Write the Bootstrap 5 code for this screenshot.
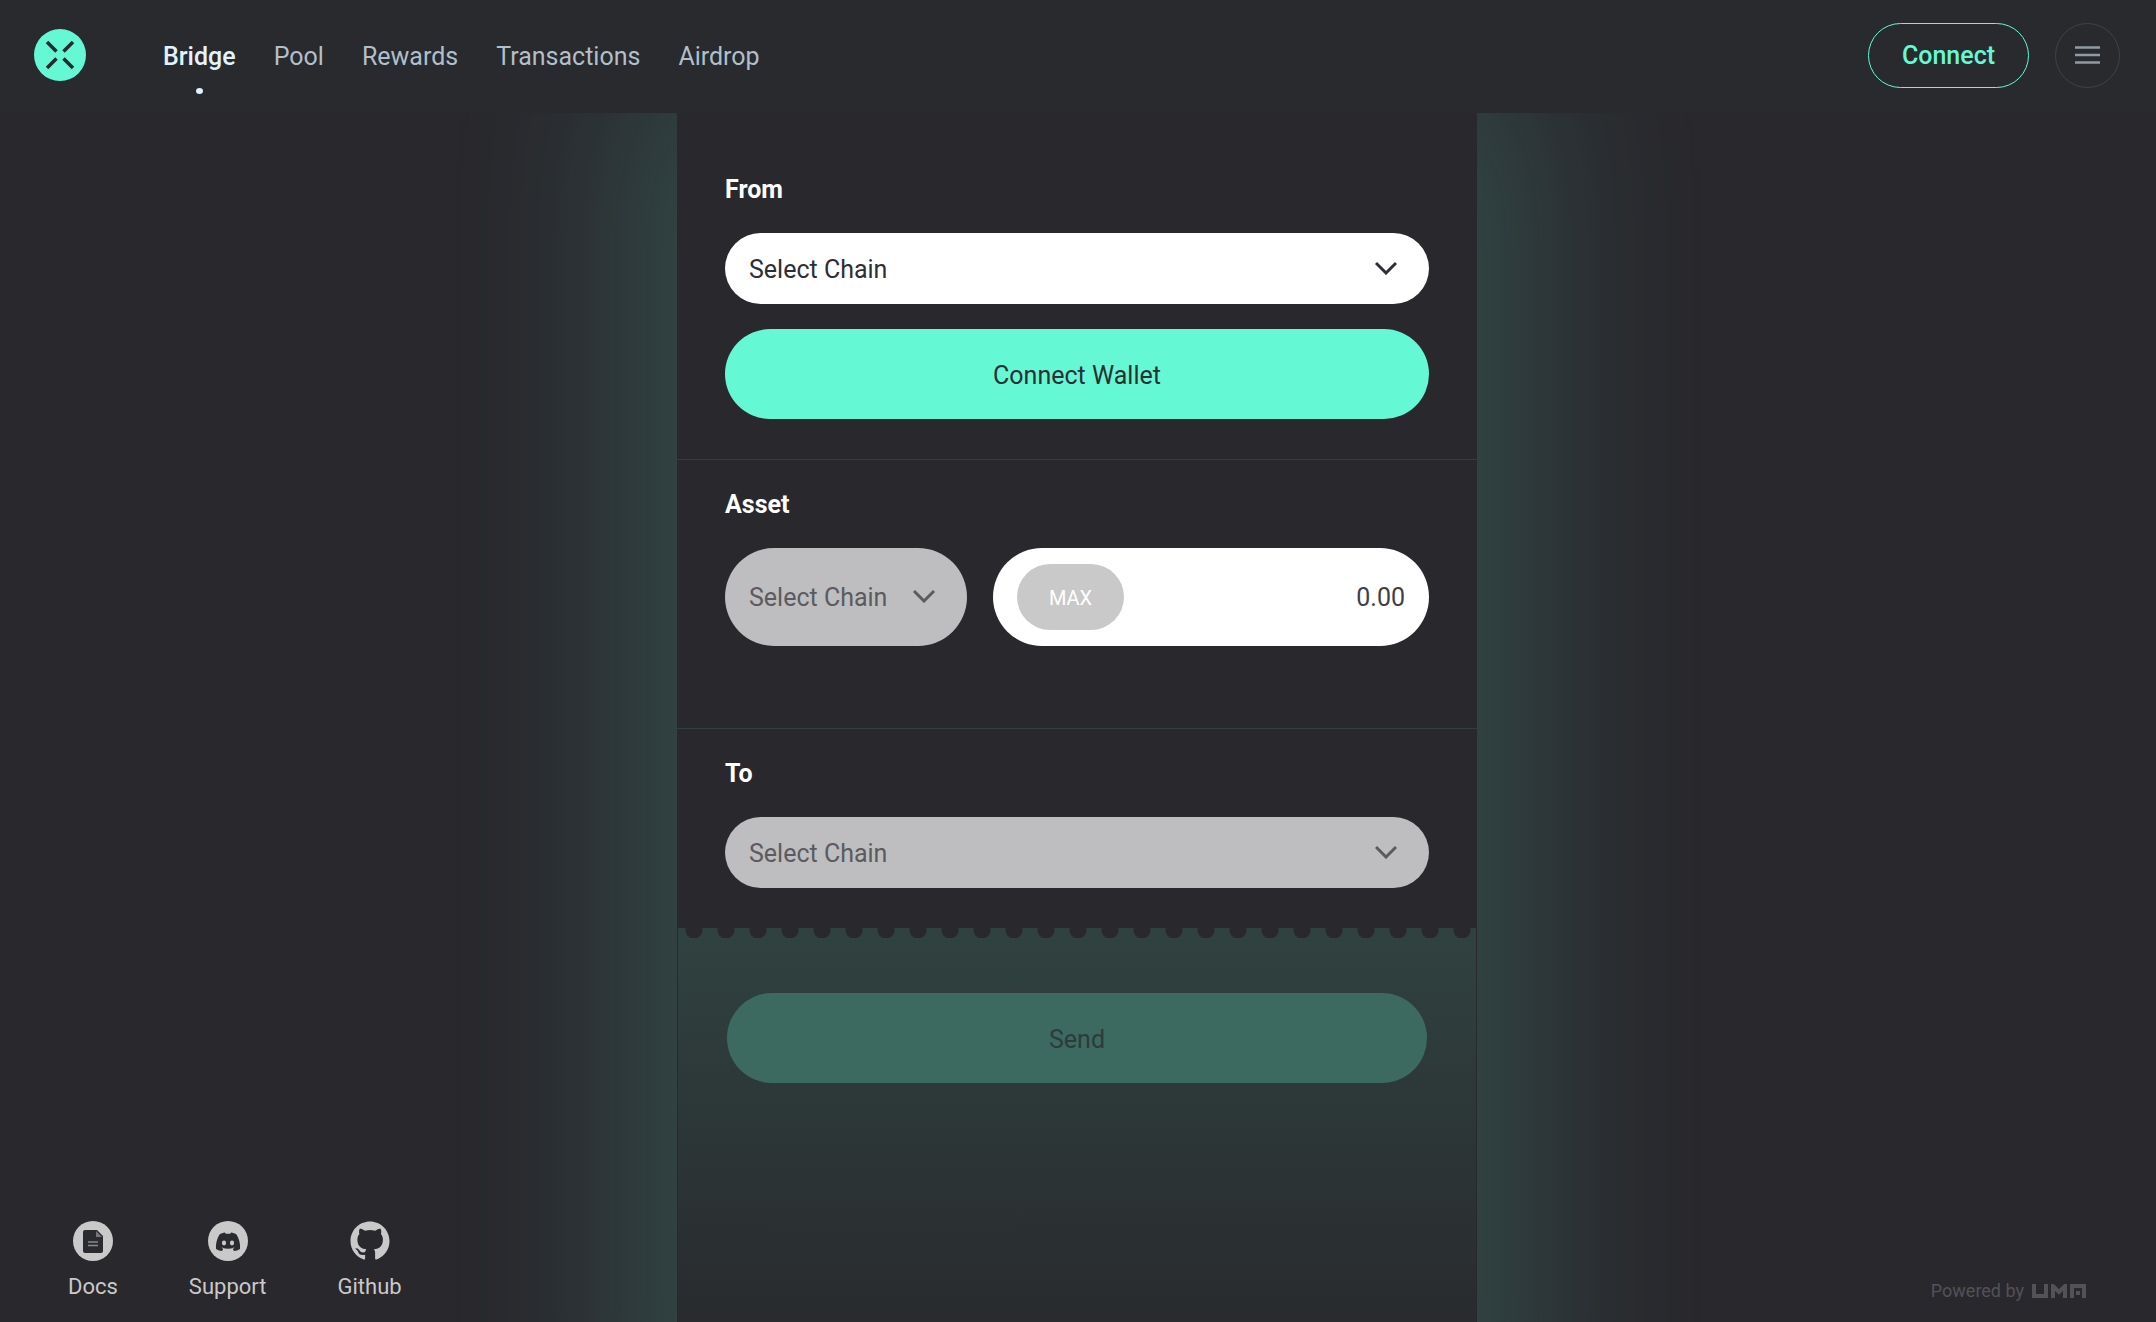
<!DOCTYPE html>
<html lang="en">
<head>
<meta charset="utf-8">
<meta name="viewport" content="width=device-width, initial-scale=1">
<title>Across Bridge</title>
<link href="https://cdn.jsdelivr.net/npm/bootstrap@5.3.0/dist/css/bootstrap.min.css" rel="stylesheet">
<style>
:root{--ink:#29282d;--bar:#282a2d;--mint:#65f8d5;--soft:#b1bfca}
body{background:var(--ink);color:#fff;font-family:Roboto,"Liberation Sans",sans-serif;font-size:25px;line-height:32px}
.topbar{background:var(--bar);height:113px;padding:0 36px 3px 34px}
.topbar .navbar-nav{--bs-navbar-nav-link-padding-x:0;gap:38px;margin-left:77px;padding-top:3px}
.topbar .nav-link{color:var(--soft);padding:0;position:relative}
.topbar .nav-link.active{color:#e0f3ff;font-weight:500}
.topbar .nav-link.active::after{content:"";position:absolute;left:50%;top:47px;width:7px;height:6px;margin-left:-3px;border-radius:50%;background:#e0f3ff}
.btn-wallet{width:161px;height:65px;border:1px solid var(--mint);border-radius:33px;color:var(--mint);font-size:25px;font-weight:500;padding:2px 0 0}
.btn-wallet:hover{color:var(--ink);background:var(--mint)}
.btn-menu{width:65px;height:65px;border:1px solid #3f4247;border-radius:50%;padding:0}
.gap-26{gap:26px}
.stage{overflow:hidden;position:relative;padding-right:2px}
.panel{width:800px;max-width:100%;position:relative}
.glow{position:absolute;inset:0 0 -110px 0;box-shadow:0 0 160px 60px rgba(103,248,214,.16)}
.panel-body{position:relative;background:var(--ink)}
.block{padding:25px 48px 40px}
.block+.block{border-top:1px solid #2f403f}
.block-first{padding-top:57px}
.block-asset{padding-bottom:82px}
.block label{display:block;font-weight:700;line-height:40px;margin-bottom:23px}
.pill{height:71px;border:0;border-radius:36px;padding:2px 24px 0;font-size:25px;color:#2c2f33;background-color:#fff;background-image:none;-webkit-appearance:none;appearance:none}
.pill:disabled{color:#5b5b5f;background-color:#bebec0;opacity:1}
.pill-wrap{position:relative}
.pill-wrap svg{position:absolute;right:32px;top:50%;margin-top:-8px;pointer-events:none}
.btn-xl{height:90px;border-radius:45px;font-size:25px;border:0;padding:3px 0 0}
.btn-mint,.btn-mint:hover{background:var(--mint);color:#2c2f33;margin-top:25px}
.pill-tall{height:98px;border-radius:49px}
.coin{flex:0 0 242px}
.amount-box{background:#fff;padding:0 24px;min-width:0}
.btn-max,.btn-max:disabled{flex:0 0 107px;height:66px;border-radius:33px;background:#c9c9c9;color:#fff;font-size:20px;border:0;opacity:1;padding:2px 0 0}
.amount-input{width:0;border:0;background:none;text-align:right;color:#3e4047;font-size:25px;padding:2px 0 0;outline:0}
.amount-input::placeholder{color:#3e4047;opacity:1}
.ticket{position:relative;margin:0 1px;background:linear-gradient(#304240,#292b2e)}
.ticket::before{content:"";position:absolute;left:0;right:0;top:0;height:10px;background:radial-gradient(circle 9px at 16px 2px,var(--ink) 8px,transparent 9px) 0 0/32px 10px}
.ticket-body{padding:65px 49px}
.btn-send,.btn-send:disabled{background:#3c6a60;color:#2d3b3b;opacity:1}
.foot-links{position:absolute;left:68px;bottom:21px;gap:71px}
.foot-links a{color:#c9c9c9;text-decoration:none;font-size:22px;line-height:28px}
.foot-links svg{display:block;margin:0 auto 12px}
.powered{position:absolute;right:70px;bottom:15px;color:#525257;font-size:18px;text-decoration:none}
</style>
</head>
<body class="vh-100 d-flex flex-column overflow-hidden">
<header class="navbar navbar-expand topbar flex-shrink-0">
  <a href="#" class="d-block" aria-label="Across home"><svg class="d-block" width="52" height="52" viewBox="0 0 52 52"><circle cx="26" cy="26" r="26" fill="#65f8d5"/><path d="M13 13l9.500 9.500M39 13l-9.500 9.500M13 39l9.500-9.500M39 39l-9.500-9.500" stroke="#282a2d" stroke-width="3.500"/></svg></a>
  <nav aria-label="Main"><ul class="navbar-nav">
    <li class="nav-item"><a class="nav-link active" aria-current="page" href="#">Bridge</a></li>
    <li class="nav-item"><a class="nav-link" href="#">Pool</a></li>
    <li class="nav-item"><a class="nav-link" href="#">Rewards</a></li>
    <li class="nav-item"><a class="nav-link" href="#">Transactions</a></li>
    <li class="nav-item"><a class="nav-link" href="#">Airdrop</a></li>
  </ul></nav>
  <div class="d-flex align-items-center gap-26 ms-auto">
    <button type="button" class="btn btn-wallet">Connect</button>
    <button type="button" class="btn btn-menu" aria-label="Menu"><svg class="d-block mx-auto" width="25" height="20" viewBox="0 0 25 20"><path d="M0 2.500h25M0 10h25M0 17.500h25" stroke="#8e9ba5" stroke-width="2.500"/></svg></button>
  </div>
</header>
<main class="stage flex-grow-1 d-flex justify-content-center">
  <div class="panel d-flex flex-column">
    <div class="glow"></div>
    <form class="panel-body d-flex flex-column flex-grow-1">
      <section class="block block-first">
        <label for="from">From</label>
        <div class="pill-wrap">
          <select id="from" class="form-select pill"><option>Select Chain</option></select>
          <svg width="22" height="14" viewBox="0 0 22 14"><path d="M1 2l10 10L21 2" fill="none" stroke="#2c2f33" stroke-width="3"/></svg>
        </div>
        <button type="button" class="btn btn-mint btn-xl w-100">Connect Wallet</button>
      </section>
      <section class="block block-asset">
        <label for="coin">Asset</label>
        <div class="d-flex gap-26">
          <div class="pill-wrap coin">
            <select id="coin" class="form-select pill pill-tall" disabled><option>Select Chain</option></select>
            <svg width="22" height="14" viewBox="0 0 22 14"><path d="M1 2l10 10L21 2" fill="none" stroke="#5b5b5f" stroke-width="3"/></svg>
          </div>
          <div class="amount-box pill-tall d-flex align-items-center flex-grow-1">
            <button type="button" class="btn btn-max" disabled>MAX</button>
            <input class="amount-input flex-grow-1" type="text" placeholder="0.00" aria-label="Amount">
          </div>
        </div>
      </section>
      <section class="block">
        <label for="to">To</label>
        <div class="pill-wrap">
          <select id="to" class="form-select pill" disabled><option>Select Chain</option></select>
          <svg width="22" height="14" viewBox="0 0 22 14"><path d="M1 2l10 10L21 2" fill="none" stroke="#5b5b5f" stroke-width="3"/></svg>
        </div>
      </section>
      <section class="ticket flex-grow-1"><div class="ticket-body">
        <button type="submit" class="btn btn-send btn-xl w-100" disabled>Send</button>
      </div></section>
    </form>
  </div>
  <div class="foot-links d-flex text-center">
    <a href="#"><svg width="40" height="40" viewBox="0 0 40 40"><circle cx="20" cy="20" r="20" fill="#c9c9c9"/><path d="M12 9h12l6 6v15a2 2 0 0 1-2 2H12a2 2 0 0 1-2-2V11a2 2 0 0 1 2-2z" fill="#292b2e"/><path d="M23 10v6h6z" fill="#77777a"/><path d="M15 21h10M15 24.500h10" stroke="#8a8a8c" stroke-width="1.300"/></svg>Docs</a>
    <a href="#"><svg width="40" height="40" viewBox="0 0 40 40"><circle cx="20" cy="20" r="20" fill="#c9c9c9"/><path d="M17 11.500c-2 .2-4 1-5.500 2C9 17.500 7.500 22.500 8 28c2 1.300 4 1.800 6 2l1.300-2.200-1.800-.9.500-.4c4 1.600 8 1.600 12 0l.5.400-1.800.9L26 30c2-.2 4-.7 6-2 .5-5.500-1-10.500-3.500-14.500-1.500-1-3.500-1.800-5.500-2l-.7 1.300a20 20 0 0 0-4.600 0z" fill="#292b2e"/><ellipse cx="16" cy="22" rx="2.100" ry="2.400" fill="#c9c9c9"/><ellipse cx="24" cy="22" rx="2.100" ry="2.400" fill="#c9c9c9"/></svg>Support</a>
    <a href="#"><svg width="40" height="40" viewBox="0 0 16 16"><path fill="#c9c9c9" d="M8 .2C3.700.2.200 3.700.200 8c0 3.450 2.200 6.350 5.300 7.400.4.070.55-.17.55-.38v-1.500c-2 .4-2.530-.5-2.690-.95-.09-.23-.48-.95-.82-1.140-.28-.15-.68-.52-.01-.53.63-.01 1.080.58 1.230.82.720 1.210 1.870.87 2.330.66.070-.52.280-.87.510-1.070-1.780-.2-3.640-.89-3.640-3.950 0-.87.310-1.590.82-2.150-.08-.2-.36-1.020.080-2.120 0 0 .67-.21 2.200.82a7.500 7.500 0 0 1 4 0c1.530-1.040 2.200-.82 2.200-.82.440 1.100.160 1.920.080 2.120.51.560.82 1.270.82 2.150 0 3.070-1.870 3.750-3.650 3.950.29.250.54.730.54 1.480v2.200c0 .21.150.46.550.38A7.800 7.800 0 0 0 15.800 8C15.800 3.700 12.300.2 8 .2z"/></svg>Github</a>
  </div>
  <a class="powered d-flex align-items-center gap-2" href="#">Powered by
    <svg width="54" height="14" viewBox="0 0 54 14" aria-label="UMA"><path d="M2 0v12h12V0M21 14V2l6 6 6-6v12M40 14V2h12v12" fill="none" stroke="#525257" stroke-width="4"/><path d="M44 7h4v4h-4z" fill="#525257"/></svg></a>
</main>
<script src="https://cdn.jsdelivr.net/npm/bootstrap@5.3.0/dist/js/bootstrap.bundle.min.js"></script>
</body>
</html>
